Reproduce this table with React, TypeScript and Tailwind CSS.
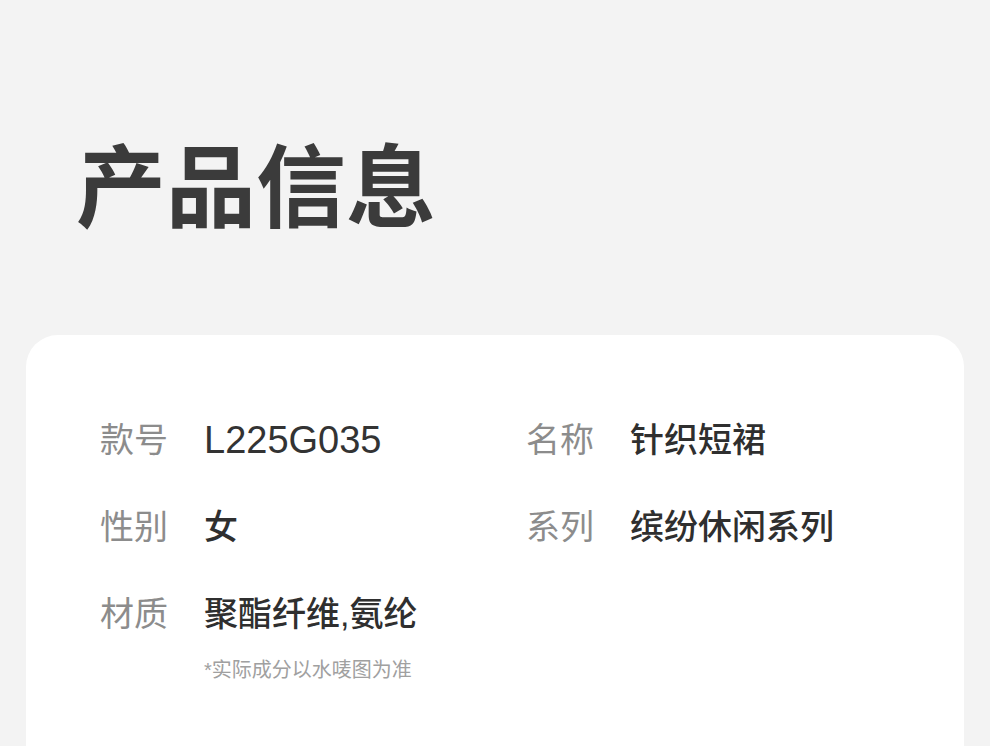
const font = { fontFamily: '"Liberation Sans", "Noto Sans CJK SC", sans-serif' };

type Row = { label: string; value: string; note?: string; latin?: boolean };

const left: Row[] = [
  { label: "款号", value: "L225G035", latin: true },
  { label: "性别", value: "女" },
  { label: "材质", value: "聚酯纤维,氨纶", note: "*实际成分以水唛图为准" },
];

const right: Row[] = [
  { label: "名称", value: "针织短裙" },
  { label: "系列", value: "缤纷休闲系列" },
];

function Item({ row }: { row: Row }) {
  return (
    <div className="flex h-[87px]">
      <div className="w-[104px] shrink-0 text-[34px] leading-[44px] text-[#8c8c8c]">{row.label}</div>
      <div className="flex flex-col">
        <div
          className={
            row.latin
              ? "text-[38px] leading-[44px] text-[#333333]"
              : "text-[34px] leading-[44px] font-medium text-[#2f2f2f]"
          }
        >
          {row.value}
        </div>
        {row.note && (
          <div className="mt-[21px] text-[20px] leading-[26px] text-[#a0a0a0]">{row.note}</div>
        )}
      </div>
    </div>
  );
}

export default function App() {
  return (
    <div className="h-[746px] overflow-hidden bg-[#f3f3f3]" style={font}>
      <div className="pt-[129px] pl-[76px]">
        <h1 className="text-[90px] leading-[120px] font-bold text-[#3b3b3b]">产品信息</h1>
      </div>
      <div className="mx-[26px] mt-[86px] h-[500px] rounded-[32px] bg-white pl-[74px] pt-[83px]">
        <div className="flex">
          <div className="w-[426px]">
            {left.map((r) => (
              <Item key={r.label} row={r} />
            ))}
          </div>
          <div>
            {right.map((r) => (
              <Item key={r.label} row={r} />
            ))}
          </div>
        </div>
      </div>
    </div>
  );
}
